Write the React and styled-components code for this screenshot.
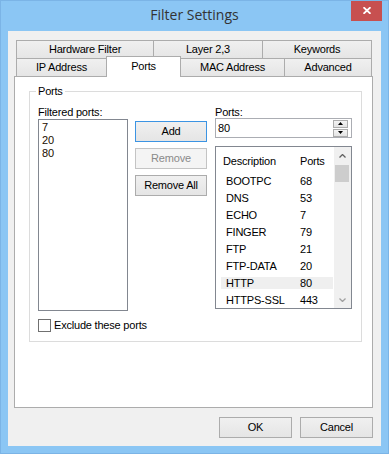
import React from 'react';
import styled, { createGlobalStyle } from 'styled-components';

const GlobalStyle = createGlobalStyle`
  html, body { margin: 0; padding: 0; background: #8BC6F4; }
  body {
    font-family: "Liberation Sans", Arial, sans-serif;
    font-size: 11px;
    letter-spacing: -0.2px;
    color: #000;
  }
  * { box-sizing: border-box; }
`;

const Window = styled.div`
  width: 389px;
  height: 454px;
  background: #8BC6F4;
  border: 1px solid #7BB4E6;
  display: flex;
  flex-direction: column;
  overflow: hidden;
`;

const TitleBar = styled.div`
  flex: none;
  height: 30px;
  display: grid;
  grid-template-columns: 1fr auto 1fr;
  align-items: start;
`;

const Title = styled.div`
  grid-column: 2;
  padding-top: 4px;
  font-family: "Open Sans", "Noto Sans", sans-serif;
  font-size: 14px;
  letter-spacing: 0;
  line-height: 20px;
  color: #333;
  white-space: nowrap;
`;

const CloseButton = styled.div`
  grid-column: 3;
  justify-self: end;
  margin-top: -1px;
  margin-right: 6px;
  width: 31px;
  height: 21px;
  background: #C75050;
  display: flex;
  align-items: center;
  justify-content: center;
`;

const Client = styled.div`
  flex: 1;
  margin: 0 7px 7px;
  background: #F0F0F0;
  display: flex;
  flex-direction: column;
  padding: 9px 8px 8px 6px;
`;

const TabStrip = styled.div`
  flex: none;
  margin: 0 1px 0 2px;
  display: flex;
  flex-direction: column;
`;

const TabRow = styled.div`
  display: flex;
  height: 18px;
  align-items: flex-end;
`;

const Tab = styled.div`
  flex: none;
  width: ${p => p.$w}px;
  height: ${p => (p.$selected ? 21 : 18)}px;
  margin-bottom: ${p => (p.$selected ? -1 : 0)}px;
  margin-right: ${p => (p.$selected ? -1 : 0)}px;
  padding-top: ${p => (p.$selected ? 1 : 0)}px;
  position: relative;
  z-index: ${p => (p.$selected ? 2 : 0)};
  border: 1px solid #ACACAC;
  border-bottom: none;
  border-right: ${p => (p.$last || p.$selected ? '1px solid #ACACAC' : 'none')};
  background: ${p => (p.$selected ? '#FFFFFF' : 'linear-gradient(#F0F0F0, #E5E5E5)')};
  text-align: center;
  line-height: 17px;
  white-space: nowrap;
`;

const Pane = styled.div`
  flex: 1;
  position: relative;
  z-index: 1;
  background: #FFFFFF;
  border: 1px solid #ACACAC;
  padding: 8px 10px 0 14px;
`;

const GroupBox = styled.fieldset`
  margin: 0;
  min-width: 0;
  border: 1px solid #DCDCDC;
  padding: 8px 8px 9px 8px;
`;

const Legend = styled.legend`
  padding: 0 2px;
  margin-left: -2px;
  line-height: 13px;
`;

const Columns = styled.div`
  display: flex;
  align-items: flex-start;
`;

const Column = styled.div`
  flex: none;
  width: ${p => p.$w}px;
  margin-left: ${p => p.$gap || 0}px;
  display: flex;
  flex-direction: column;
`;

const Label = styled.div`
  height: 13px;
  line-height: 13px;
  white-space: nowrap;
`;

const ListBox = styled.div`
  height: 192px;
  border: 1px solid #828790;
  background: #fff;
  padding: 1px 3px;
`;

const ListItem = styled.div`
  line-height: 13px;
  color: #1a0d00;
`;

const ButtonColumn = styled.div`
  flex: none;
  margin-left: 7px;
  padding-top: 15px;
  display: flex;
  flex-direction: column;
  gap: 6px;
`;

const Button = styled.button`
  width: ${p => p.$w}px;
  height: 21px;
  padding: 0;
  margin: 0;
  font: inherit;
  letter-spacing: inherit;
  line-height: 13px;
  border: 1px solid
    ${p => (p.$default ? '#3C94E3' : p.disabled ? '#C4C4C4' : '#ACACAC')};
  background: ${p =>
    p.disabled ? '#F4F4F4' : 'linear-gradient(#F0F0F0, #E5E5E5)'};
  color: ${p => (p.disabled ? '#8A8A8A' : '#000')};
  display: flex;
  align-items: center;
  justify-content: center;
`;

const SpinEdit = styled.div`
  height: 20px;
  margin-top: -1px;
  border: 1px solid #ABADB3;
  background: #fff;
  display: flex;
  align-items: center;
  padding: 0 3px 0 2px;
`;

const EditText = styled.span`
  flex: 1;
  line-height: 13px;
`;

const Spin = styled.div`
  display: flex;
  flex-direction: column;
  gap: 1px;
`;

const SpinButton = styled.div`
  width: 15px;
  height: 8px;
  border: 1px solid #ACACAC;
  background: linear-gradient(#F4F4F4, #E3E3E3);
  display: flex;
  align-items: center;
  justify-content: center;
`;

const ListView = styled.div`
  height: 163px;
  margin-top: 8px;
  border: 1px solid #828790;
  background: #fff;
  display: flex;
  overflow: hidden;
`;

const ListBody = styled.div`
  flex: 1;
  min-width: 0;
`;

const HeaderRow = styled.div`
  display: grid;
  grid-template-columns: 80px 1fr;
  height: 26px;
  padding-top: 2px;
  line-height: 24px;
  white-space: nowrap;
`;

const HeaderCell = styled.div`
  padding-left: ${p => p.$pad}px;
`;

const Row = styled.div`
  display: grid;
  grid-template-columns: 75px 1fr;
  height: 17px;
  line-height: 17px;
  margin: 0 1px 0 5px;
  white-space: nowrap;
  background: ${p =>
    p.$hot
      ? 'linear-gradient(to bottom, transparent 2px, #EFEFEF 2px, #EFEFEF 14px, transparent 14px)'
      : 'transparent'};
`;

const Cell = styled.div`
  padding-left: ${p => p.$pad}px;
`;

const ScrollBar = styled.div`
  flex: none;
  width: 17px;
  background: #F0F0F0;
  display: flex;
  flex-direction: column;
`;

const ScrollArrow = styled.div`
  flex: none;
  height: 17px;
  display: flex;
  align-items: center;
  justify-content: center;
`;

const Thumb = styled.div`
  flex: none;
  height: 17px;
  margin: 1px 2px 0 1px;
  background: #CDCDCD;
`;

const Track = styled.div`
  flex: 1;
`;

const CheckRow = styled.label`
  display: flex;
  align-items: center;
  gap: 3px;
  margin-top: 8px;
  height: 13px;
  line-height: 13px;
`;

const CheckBox = styled.span`
  width: 13px;
  height: 13px;
  border: 1px solid #707070;
  background: #fff;
`;

const Footer = styled.div`
  flex: none;
  margin-top: 9px;
  display: flex;
  justify-content: flex-end;
  gap: 8px;
`;

const services = [
  ['BOOTPC', '68'],
  ['DNS', '53'],
  ['ECHO', '7'],
  ['FINGER', '79'],
  ['FTP', '21'],
  ['FTP-DATA', '20'],
  ['HTTP', '80'],
  ['HTTPS-SSL', '443'],
];

const Chevron = ({ up, color }) => (
  <svg width="7" height="4" viewBox="0 0 7 4">
    <polyline
      points={up ? '0.5,3.5 3.5,0.5 6.5,3.5' : '0.5,0.5 3.5,3.5 6.5,0.5'}
      fill="none"
      stroke={color}
      strokeWidth="1.3"
    />
  </svg>
);

const Triangle = ({ up }) => (
  <svg width="5" height="3" viewBox="0 0 5 3">
    <polygon points={up ? '0,3 5,3 2.5,0' : '0,0 5,0 2.5,3'} fill="#000" />
  </svg>
);

export default function App() {
  return (
    <>
      <GlobalStyle />
      <Window>
        <TitleBar>
          <Title>Filter Settings</Title>
          <CloseButton>
            <svg width="8" height="7" viewBox="0 0 8 7">
              <path d="M0.5 0.2 L7.5 6.8 M7.5 0.2 L0.5 6.8" stroke="#fff" strokeWidth="1.8" />
            </svg>
          </CloseButton>
        </TitleBar>
        <Client>
          <TabStrip>
            <TabRow>
              <Tab $w={137}>Hardware Filter</Tab>
              <Tab $w={109}>Layer 2,3</Tab>
              <Tab $w={110} $last>Keywords</Tab>
            </TabRow>
            <TabRow>
              <Tab $w={90}>IP Address</Tab>
              <Tab $w={75} $selected>Ports</Tab>
              <Tab $w={104}>MAC Address</Tab>
              <Tab $w={88} $last>Advanced</Tab>
            </TabRow>
          </TabStrip>
          <Pane>
            <GroupBox>
              <Legend>Ports</Legend>
              <Columns>
                <Column $w={90}>
                  <Label>Filtered ports:</Label>
                  <ListBox>
                    <ListItem>7</ListItem>
                    <ListItem>20</ListItem>
                    <ListItem>80</ListItem>
                  </ListBox>
                </Column>
                <ButtonColumn>
                  <Button $w={72} $default>Add</Button>
                  <Button $w={72} disabled>Remove</Button>
                  <Button $w={72}>Remove All</Button>
                </ButtonColumn>
                <Column $w={137} $gap={8}>
                  <Label>Ports:</Label>
                  <SpinEdit>
                    <EditText>80</EditText>
                    <Spin>
                      <SpinButton><Triangle up /></SpinButton>
                      <SpinButton><Triangle /></SpinButton>
                    </Spin>
                  </SpinEdit>
                  <ListView>
                    <ListBody>
                      <HeaderRow>
                        <HeaderCell $pad={7}>Description</HeaderCell>
                        <HeaderCell $pad={4}>Ports</HeaderCell>
                      </HeaderRow>
                      {services.map(([name, port]) => (
                        <Row key={name} $hot={name === 'HTTP'}>
                          <Cell $pad={5}>{name}</Cell>
                          <Cell $pad={4}>{port}</Cell>
                        </Row>
                      ))}
                    </ListBody>
                    <ScrollBar>
                      <ScrollArrow><Chevron up color="#606060" /></ScrollArrow>
                      <Thumb />
                      <Track />
                      <ScrollArrow><Chevron color="#A0A0A0" /></ScrollArrow>
                    </ScrollBar>
                  </ListView>
                </Column>
              </Columns>
              <CheckRow>
                <CheckBox />
                <span>Exclude these ports</span>
              </CheckRow>
            </GroupBox>
          </Pane>
          <Footer>
            <Button $w={73}>OK</Button>
            <Button $w={73}>Cancel</Button>
          </Footer>
        </Client>
      </Window>
    </>
  );
}
